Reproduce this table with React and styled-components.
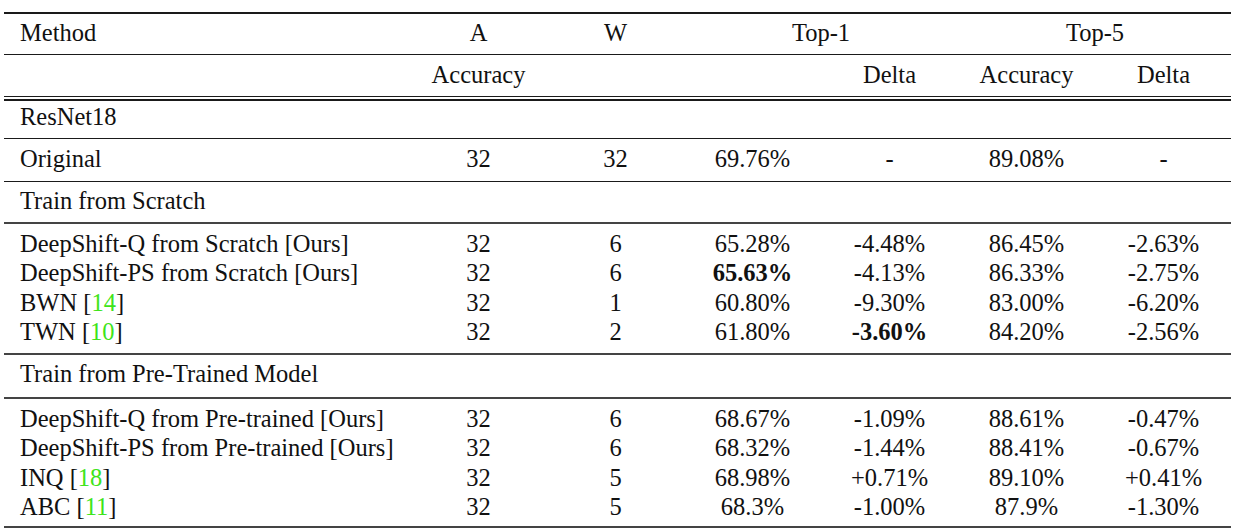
import React from "react";
import styled, { createGlobalStyle } from "styled-components";

const Global = createGlobalStyle`
  html, body { margin: 0; padding: 0; background: #fff; }
  body { font-family: "Liberation Serif", "Times New Roman", serif; color: #111; }
`;

const Page = styled.div`
  padding: 12px 0 0 4px;
  width: 1234px;
  height: 530px;
  box-sizing: border-box;
  overflow: hidden;
`;

const Table = styled.div`
  width: 1227px;
  border-top: 2px solid #1a1a1a;
  font-size: 24.5px;
`;

const Row = styled.div`
  display: grid;
  grid-template-columns: 406px repeat(6, 137px);
  align-items: center;
  height: ${(p) => p.$h || 29.5}px;
  box-sizing: border-box;
  padding-bottom: ${(p) => p.$pb || 0}px;
  line-height: 1;
  border-bottom: ${(p) => (p.$rule ? `${p.$rule}px solid ${p.$rule > 1 ? "#444" : "#1a1a1a"}` : "none")};
`;

const Cell = styled.div`
  text-align: ${(p) => (p.$left ? "left" : "center")};
  padding-left: ${(p) => (p.$left ? "16px" : "0")};
  grid-column: ${(p) => (p.$span ? `span ${p.$span}` : "auto")};
  font-weight: ${(p) => (p.$bold ? 700 : 400)};
  white-space: nowrap;
`;

const HeaderBlock = styled.div`
  border-bottom: 1px solid #1a1a1a;
  margin-bottom: 2px;
`;

const Body = styled.div`
  border-top: 2px solid #1a1a1a;
`;

const Section = styled.div`
  border-top: 2px solid #444;
`;

const Group = styled.div`
  padding: ${(p) => p.$pt}px 0 ${(p) => p.$pb}px;
  border-bottom: 2px solid #444;
`;

const Cite = styled.span`
  color: #3ee41a;
`;

const M = ({ name, cite }) => (
  <>
    {name}
    {cite && (
      <>
        {" "}[<Cite>{cite}</Cite>]
      </>
    )}
  </>
);

const DataRow = ({ m, cite, a, w, t1, d1, t5, d5, b1, bd1 }) => (
  <Row>
    <Cell $left>
      <M name={m} cite={cite} />
    </Cell>
    <Cell>{a}</Cell>
    <Cell>{w}</Cell>
    <Cell $bold={b1}>{t1}</Cell>
    <Cell $bold={bd1}>{d1}</Cell>
    <Cell>{t5}</Cell>
    <Cell>{d5}</Cell>
  </Row>
);

const scratch = [
  { m: "DeepShift-Q from Scratch [Ours]", a: 32, w: 6, t1: "65.28%", d1: "-4.48%", t5: "86.45%", d5: "-2.63%" },
  { m: "DeepShift-PS from Scratch [Ours]", a: 32, w: 6, t1: "65.63%", d1: "-4.13%", t5: "86.33%", d5: "-2.75%", b1: true },
  { m: "BWN", cite: "14", a: 32, w: 1, t1: "60.80%", d1: "-9.30%", t5: "83.00%", d5: "-6.20%" },
  { m: "TWN", cite: "10", a: 32, w: 2, t1: "61.80%", d1: "-3.60%", t5: "84.20%", d5: "-2.56%", bd1: true },
];

const pretrained = [
  { m: "DeepShift-Q from Pre-trained [Ours]", a: 32, w: 6, t1: "68.67%", d1: "-1.09%", t5: "88.61%", d5: "-0.47%" },
  { m: "DeepShift-PS from Pre-trained [Ours]", a: 32, w: 6, t1: "68.32%", d1: "-1.44%", t5: "88.41%", d5: "-0.67%" },
  { m: "INQ", cite: "18", a: 32, w: 5, t1: "68.98%", d1: "+0.71%", t5: "89.10%", d5: "+0.41%" },
  { m: "ABC", cite: "11", a: 32, w: 5, t1: "68.3%", d1: "-1.00%", t5: "87.9%", d5: "-1.30%" },
];

export default function App() {
  return (
    <Page>
      <Global />
      <Table>
        <HeaderBlock>
          <Row $h={41} $pb={1} $rule={1}>
            <Cell $left>Method</Cell>
            <Cell>A</Cell>
            <Cell>W</Cell>
            <Cell $span={2}>Top-1</Cell>
            <Cell $span={2}>Top-5</Cell>
          </Row>
          <Row $h={41} $pb={1}>
            <Cell $left></Cell>
            <Cell>Accuracy</Cell>
            <Cell></Cell>
            <Cell></Cell>
            <Cell>Delta</Cell>
            <Cell>Accuracy</Cell>
            <Cell>Delta</Cell>
          </Row>
        </HeaderBlock>
        <Body>
          <Row $h={38} $pb={4} $rule={1}>
            <Cell $left>ResNet18</Cell>
          </Row>
          <Row $h={43} $pb={1} $rule={1}>
            <Cell $left>Original</Cell>
            <Cell>32</Cell>
            <Cell>32</Cell>
            <Cell>69.76%</Cell>
            <Cell>-</Cell>
            <Cell>89.08%</Cell>
            <Cell>-</Cell>
          </Row>
          <Row $h={42} $pb={2} $rule={2}>
            <Cell $left>Train from Scratch</Cell>
          </Row>
          <Group $pt={5} $pb={6}>
            {scratch.map((r) => (
              <DataRow key={r.m} {...r} />
            ))}
          </Group>
          <Row $h={42} $pb={3}>
            <Cell $left>Train from Pre-Trained Model</Cell>
          </Row>
          <Section>
            <Group $pt={5} $pb={4}>
              {pretrained.map((r) => (
                <DataRow key={r.m} {...r} />
              ))}
            </Group>
          </Section>
        </Body>
      </Table>
    </Page>
  );
}
